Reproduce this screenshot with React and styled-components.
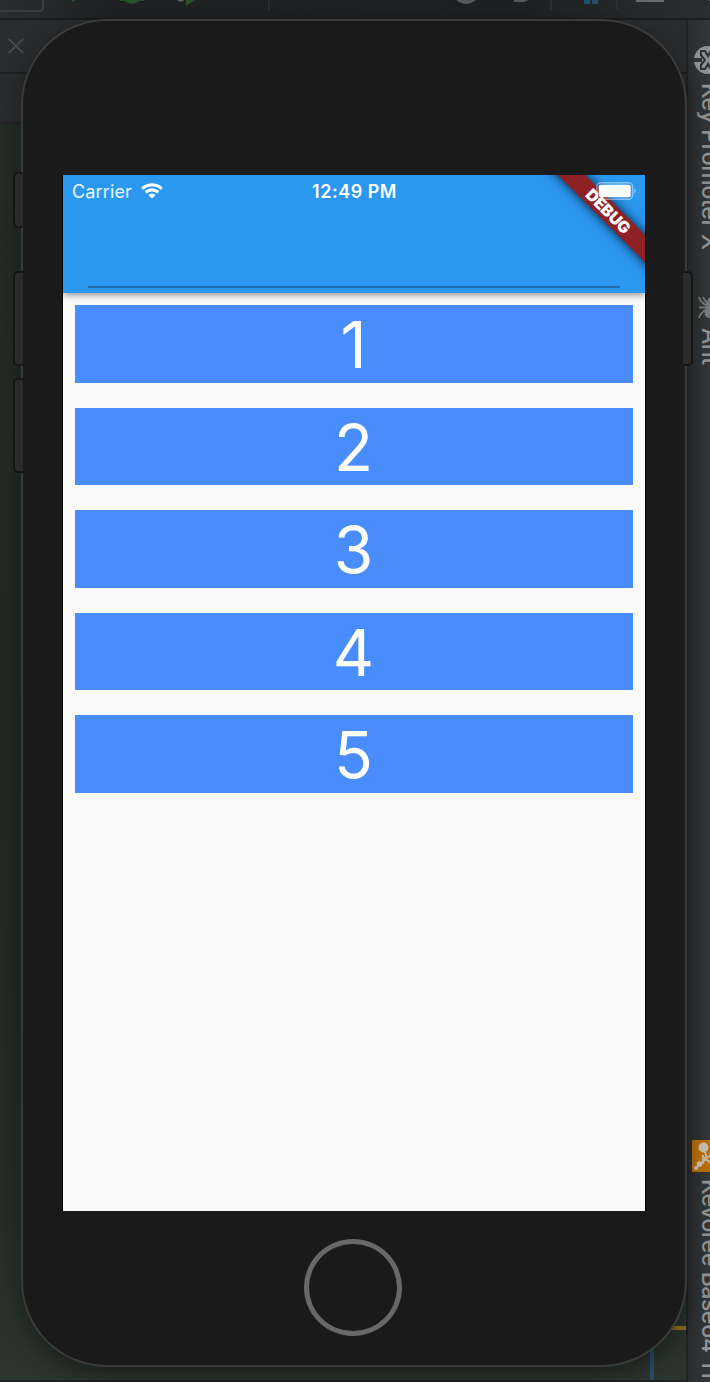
import React from "react";
import styled, { createGlobalStyle } from "styled-components";

const Global = createGlobalStyle`
  *, *::before, *::after { box-sizing: border-box; }
  body { margin: 0; overflow: hidden; background: #1e2022; font-family: Inter, Roboto, "Liberation Sans", sans-serif; }
`;

const Desktop = styled.main`
  position: relative;
  width: 710px;
  height: 1382px;
  overflow: hidden;
  display: grid;
  grid-template: 20px 1362px / 686px 24px;
`;

const Toolbar = styled.header`
  grid-column: 1 / 3;
  height: 20px;
  background: linear-gradient(90deg, #2a2c2e 0, #1f2123 110px, #1e2022 520px, #2b2d2f 710px);
  border-bottom: 2px solid #1b1c1d;
  svg { display: block; }
`;

const Workspace = styled.section`
  display: grid;
  grid-template-rows: 54px 50px 1fr 2px;
`;

const TabStrip = styled.div`
  padding: 18px 8px;
  background: #2a2c2e;
  border-bottom: 2px solid #1f2122;
  svg { display: block; }
`;

const Breadcrumbs = styled.div`
  background: #2a2c2e;
  border-bottom: 2px solid #222426;
`;

const Editor = styled.div`
  background: linear-gradient(180deg, #242c25 0, #222922 50%, #242d26 85%, #2c362e 100%);
  display: flex;
  align-items: flex-end;
  justify-content: flex-end;
  svg { display: block; }
`;

const Footer = styled.div`
  background: #222324;
`;

const Rail = styled.aside`
  background: linear-gradient(90deg, #2b2e30, #343638);
  border-left: 2px solid #202224;
  display: flex;
  flex-direction: column;
  overflow: hidden;
`;

const Tool = styled.div`
  display: flex;
  flex-direction: column;
  align-items: flex-start;
  flex: none;
  height: ${(p) => p.$height}px;
  padding: ${(p) => p.$top}px 0 0 ${(p) => p.$left}px;
  svg { display: block; flex: none; }
`;

const ToolName = styled.span`
  writing-mode: vertical-rl;
  white-space: nowrap;
  font-size: 23px;
  font-weight: 500;
  line-height: 28px;
  letter-spacing: ${(p) => p.$spacing || 0}px;
  margin: ${(p) => p.$gap}px 0 0 ${(p) => p.$shift}px;
  color: #929394;
`;

const SideButton = styled.div`
  position: absolute;
  left: ${(p) => p.$left}px;
  top: ${(p) => p.$top}px;
  width: 10px;
  height: ${(p) => p.$height}px;
  border: 2px solid #151616;
  border-radius: ${(p) => (p.$right ? "0 5px 5px 0" : "5px 0 0 5px")};
  border-${(p) => (p.$right ? "left" : "right")}: 0;
  background: #2b2b2c;
`;

const Phone = styled.section`
  position: absolute;
  left: 21px;
  top: 19px;
  width: 666px;
  height: 1348px;
  border: 2px solid #3a3b3b;
  border-radius: 86px;
  background: #1a1a1a;
  box-shadow: 0 8px 24px rgba(0, 0, 0, 0.42);
  display: flex;
  flex-direction: column;
  align-items: center;
  padding-top: 154px;
`;

const Screen = styled.div`
  width: 584px;
  height: 1036px;
  flex: none;
  border: solid #000;
  border-width: 0 1px;
  background: #fafafa;
  position: relative;
  overflow: hidden;
`;

const AppBar = styled.div`
  height: 118px;
  background: #2b98f0;
  box-shadow: 0 2px 7px rgba(0, 0, 0, 0.42);
  display: flex;
  flex-direction: column;
  justify-content: space-between;
`;

const StatusBar = styled.div`
  display: grid;
  grid-template-columns: 1fr auto 1fr;
  align-items: center;
  height: 32px;
  padding: 0 8px 0 9px;
  color: #fff;
  font-size: 18px;
  position: relative;
  z-index: 1;
  svg { display: block; }
`;

const Signal = styled.div`
  display: flex;
  align-items: center;
  gap: 9px;
  letter-spacing: 0.15px;
  color: #eaf5fe;
`;

const Clock = styled.div`
  font-weight: 600;
  font-size: 18px;
  letter-spacing: 0.5px;
`;

const Battery = styled.div`
  justify-self: end;
`;

const InputLine = styled.div`
  height: 2px;
  margin: 0 25px 5px;
  background: #1f6dac;
`;

const List = styled.div`
  display: flex;
  flex-direction: column;
  gap: 24.85px;
  padding: 12.4px;
`;

const Row = styled.div`
  height: 77.6px;
  background: #498dfd;
  color: #fff;
  font-size: 64px;
  line-height: 80px;
  text-align: center;
  padding-right: 1px;
`;

const Ribbon = styled.div`
  position: absolute;
  top: 25.5px;
  right: -41.5px;
  width: 160px;
  height: 19px;
  transform: rotate(45deg);
  background: #8f2026;
  box-shadow: 0 0 12px rgba(0, 0, 0, 0.85);
  color: #fff;
  font-size: 16px;
  font-weight: 900;
  line-height: 19px;
  text-align: center;
  padding-left: 3px;
`;

const HomeButton = styled.div`
  flex: none;
  width: 98px;
  height: 97px;
  margin: 28px 2px 0 0;
  border: 5px solid #686868;
  border-radius: 50%;
`;

const ToolbarIcons = () => (
  <svg width="710" height="18" viewBox="0 0 710 18">
    <path d="M-4 11H39Q43 11 43 7V-4" fill="none" stroke="#3b3d3e" strokeWidth="2" />
    <path d="M72 0h4l-4 2z" fill="#25552b" />
    <path d="M120 0H144V1H139Q132 7 125 1H120Z" fill="#25552b" />
    <path d="M177 0h7q-3 3-7 0z" fill="#626465" />
    <path d="M186 0H195L186 6Z" fill="#25552b" />
    <path d="M269 0V10M551 0V10M617 0V10" stroke="#2c2e30" strokeWidth="2" />
    <path d="M456 0H476Q466 8 456 0Z" fill="#58595b" />
    <path d="M514 0H528Q526 2 521 2H514Z" fill="#58595b" />
    <path d="M584 0h6v4h-6zM592 0h6v4h-6z" fill="#20506c" />
    <path d="M636 0h28v2h-28z" fill="#68696b" />
    <path d="M709 0h1v1h-1z" fill="#68696b" />
  </svg>
);

const WifiIcon = () => (
  <svg width="22" height="16" viewBox="0 0 22 16" fill="none" stroke="#fff" strokeWidth="3">
    <path d="M1.1 5.6Q11-2.1 20.9 5.6" />
    <path d="M4.6 9.3Q11 4.4 17.4 9.3" />
    <path d="M7.4 12Q11 9 14.6 12L11 15.6Z" fill="#fff" stroke="none" />
  </svg>
);

const BatteryIcon = () => (
  <svg width="41" height="18" viewBox="0 0 41 18">
    <rect x="0.8" y="0.8" width="35.8" height="16.4" rx="4" fill="none" stroke="#fff" strokeOpacity="0.45" strokeWidth="1.5" />
    <rect x="2.7" y="2.8" width="32" height="12.4" rx="2" fill="#fff" />
    <path d="M38.3 6Q41 9 38.3 12Z" fill="#fff" fillOpacity="0.5" />
  </svg>
);

const PromoterIcon = () => (
  <svg width="28" height="28" viewBox="0 0 28 28">
    <circle cx="14" cy="14" r="14" fill="#909294" />
    <path d="M0 14H8" stroke="#303335" strokeWidth="4" />
    <path d="M7 5h4l3 5 3-5h4v4l-4 5 4 5v4h-4l-3-5-3 5H7v-4l4-5-4-5z" fill="#909294" stroke="#303335" strokeWidth="2.2" />
  </svg>
);

const AntIcon = () => (
  <svg width="28" height="24" viewBox="0 0 28 24" fill="none" stroke="#77797a" strokeWidth="1.8">
    <path d="M1 1Q2 6 9 10M5 1L10 9M1 22Q2 17 9 13M1 11.5H10" />
    <ellipse cx="12.5" cy="7" rx="3.5" ry="5.5" fill="#77797a" stroke="none" />
    <ellipse cx="11" cy="17" rx="4.5" ry="5" fill="#77797a" stroke="none" />
    <circle cx="11" cy="12" r="3" fill="#77797a" stroke="none" />
  </svg>
);

const KevoreeIcon = () => (
  <svg width="32" height="32" viewBox="0 0 32 32">
    <rect width="32" height="32" rx="1" fill="#b96e0b" />
    <path d="M11.5 8L15 18M4 28L15 18M11 15V24M11 19L20 15M12 18L22 25" stroke="#c6b89f" strokeWidth="2.2" />
    <circle cx="11.5" cy="7.5" r="5" fill="#c9c1b4" />
    <circle cx="7.5" cy="24" r="2.8" fill="#c9c1b4" />
    <circle cx="4" cy="28" r="2" fill="#c9c1b4" />
  </svg>
);

export default function App() {
  return (
    <>
      <Global />
      <Desktop>
        <Toolbar><ToolbarIcons /></Toolbar>
        <Workspace>
          <TabStrip>
            <svg width="16" height="16" viewBox="0 0 16 16">
              <path d="M.8.8L15.2 15.2M15.2.8L.8 15.2" stroke="#484d4f" strokeWidth="1.8" />
            </svg>
          </TabStrip>
          <Breadcrumbs />
          <Editor>
            <svg width="36" height="54" viewBox="0 0 36 54">
              <path d="M2 0V54" stroke="#2d4c68" strokeWidth="4" />
              <path d="M10 2H36" stroke="#947114" strokeWidth="4" />
            </svg>
          </Editor>
          <Footer />
        </Workspace>
        <Rail>
          <Tool $height={276} $top={26} $left={6}>
            <PromoterIcon />
            <ToolName $gap={9} $shift={2} $spacing={-0.3}>Key Promoter X</ToolName>
          </Tool>
          <Tool $height={838} $top={-0} $left={10}>
            <AntIcon />
            <ToolName $gap={8} $shift={-2} $spacing={-0.5}>Ant</ToolName>
          </Tool>
          <Tool $height={248} $top={6} $left={4}>
            <KevoreeIcon />
            <ToolName $gap={7} $shift={4} $spacing={-0.45}>Kevoree Base64 Ti</ToolName>
          </Tool>
        </Rail>
        <Phone>
          <Screen>
            <AppBar>
              <StatusBar>
                <Signal>Carrier <WifiIcon /></Signal>
                <Clock>12:49 PM</Clock>
                <Battery><BatteryIcon /></Battery>
              </StatusBar>
              <InputLine />
            </AppBar>
            <List>
              {[1, 2, 3, 4, 5].map((n) => <Row key={n}>{n}</Row>)}
            </List>
            <Ribbon>DEBUG</Ribbon>
          </Screen>
          <HomeButton />
        </Phone>
        <SideButton $left={13} $top={172} $height={56} />
        <SideButton $left={13} $top={271} $height={95} />
        <SideButton $left={13} $top={378} $height={95} />
        <SideButton $right $left={683} $top={271} $height={95} />
      </Desktop>
    </>
  );
}
